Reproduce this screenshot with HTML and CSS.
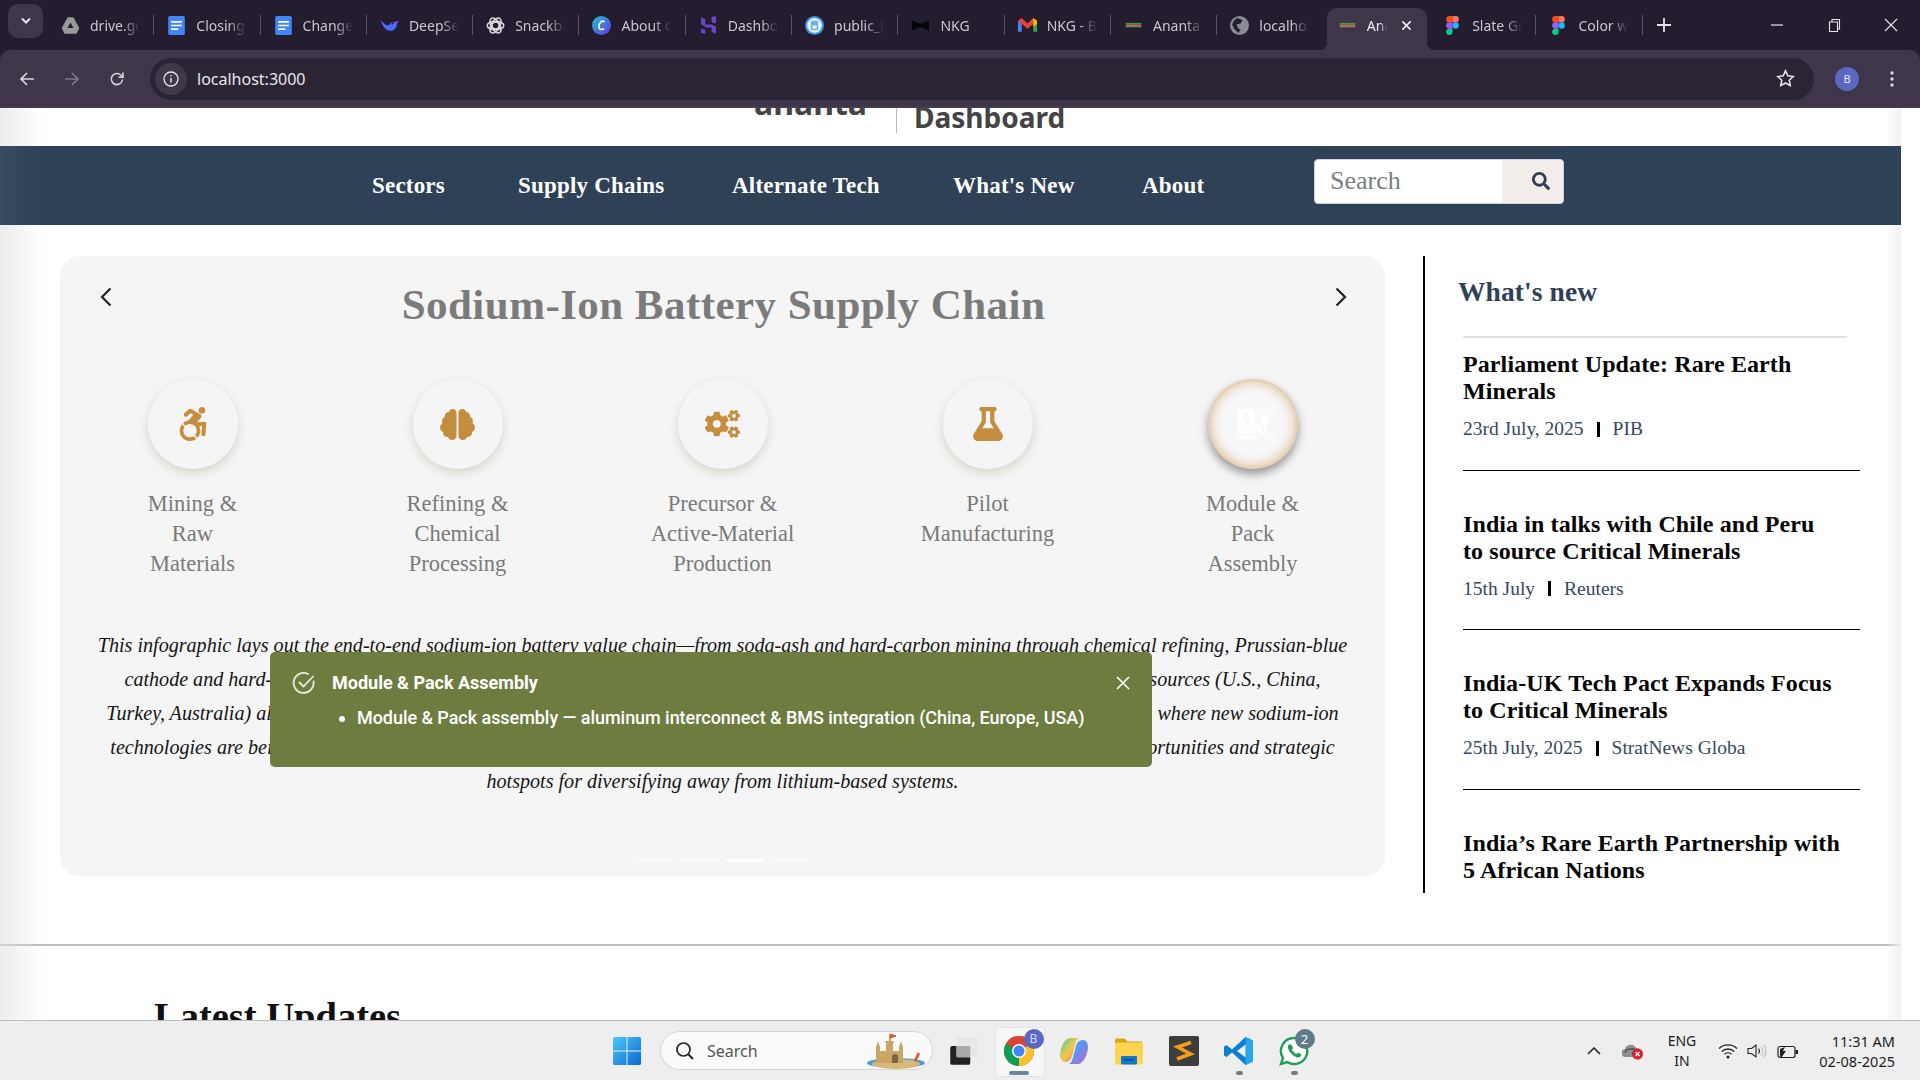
FILE: index.html
```html
<!DOCTYPE html>
<html lang="en">
<head>
<meta charset="utf-8">
<title>Ananta Dashboard</title>
<link rel="stylesheet" href="styles.css">
</head>
<body>
<div class="browser">
  <div class="tabstrip">
    <div class="tabmenu"><svg width="12" height="8" viewBox="0 0 12 8"><path d="M2 1.5 6 5.5 10 1.5" fill="none" stroke="#e6e4e8" stroke-width="2"/></svg></div>
    <div class="tab"><svg class="fav" viewBox="0 0 16 16"><path d="M5.6 1h4.8l5 9-2.4 5H3l-2.4-5z" fill="#9a9a98"/><path d="M8 5.5 10.6 10H5.4z" fill="#241e30"/></svg><span class="tabtitle">drive.google</span></div>
    <div class="tab"><svg class="fav" viewBox="0 0 16 16"><rect x="1" width="14" height="16" rx="1.5" fill="#4285f4"/><path d="M3.500 5h9M3.500 8h9M3.500 11h6" stroke="#fff" stroke-width="1.400"/></svg><span class="tabtitle">Closing</span></div>
    <div class="tab"><svg class="fav" viewBox="0 0 16 16"><rect x="1" width="14" height="16" rx="1.5" fill="#4285f4"/><path d="M3.500 5h9M3.500 8h9M3.500 11h6" stroke="#fff" stroke-width="1.400"/></svg><span class="tabtitle">Changes to</span></div>
    <div class="tab"><svg class="fav" viewBox="0 0 18 16"><path d="M1 3c1 5 4 10 9 10 4 0 6-4 6-7l2-2c-2 0-3 0-4 1-2-1-4 0-5 2-2 2-5 0-8-4z" fill="#4d6bfe"/><circle cx="12" cy="6" r="1" fill="#241e30"/></svg><span class="tabtitle">DeepSeek</span></div>
    <div class="tab"><svg class="fav" viewBox="0 0 16 16"><g fill="none" stroke="#d9d7dc" stroke-width="1.300"><circle cx="8" cy="8" r="3"/><ellipse cx="8" cy="8" rx="7" ry="3.600"/><ellipse cx="8" cy="8" rx="7" ry="3.600" transform="rotate(60 8 8)"/><ellipse cx="8" cy="8" rx="7" ry="3.600" transform="rotate(120 8 8)"/></g></svg><span class="tabtitle">Snackbar</span></div>
    <div class="tab"><svg class="fav" viewBox="0 0 18 18"><defs><linearGradient id="cv" x1="0" y1="0" x2="1" y2="1"><stop offset="0" stop-color="#19c8d2"/><stop offset="1" stop-color="#6a2fe0"/></linearGradient></defs><circle cx="9" cy="9" r="9" fill="url(#cv)"/><path d="M12 5.500C9 3.500 6.500 7 6.500 10c0 3 3 3.500 5 2" fill="none" stroke="#fff" stroke-width="1.500"/></svg><span class="tabtitle">About Canva</span></div>
    <div class="tab"><svg class="fav" viewBox="0 0 16 18"><path d="M1 1l4 2v5h6l4 2v7l-4-2v-4H5v-1l-4-2zM11 1l4-1v7l-4-1zM1 12l4 1v4l-4-1z" fill="#6747c7"/></svg><span class="tabtitle">Dashboard</span></div>
    <div class="tab"><svg class="fav" viewBox="0 0 18 18"><circle cx="9" cy="9" r="9" fill="#3b93e6"/><circle cx="9" cy="9" r="7" fill="#e8f3fc"/><rect x="5.500" y="4.500" width="7" height="9" rx="1" fill="#6bb2ee"/><rect x="7" y="9" width="4" height="3" fill="#e8f3fc"/></svg><span class="tabtitle">public_html</span></div>
    <div class="tab"><svg class="fav" viewBox="0 0 18 12"><path d="M1 1l6 3h4l6-3v10l-6-3H7l-6 3z" fill="#050505"/></svg><span class="tabtitle">NKG</span></div>
    <div class="tab"><svg class="fav" viewBox="0 0 18 14"><path d="M0 2.500V13h3.500V5z" fill="#4285f4"/><path d="M18 2.500V13h-3.500V5z" fill="#34a853"/><path d="M0 2.500 3.500 0 9 5 14.500 0 18 2.500 9 10z" fill="#ea4335"/><path d="M14.500 0 18 2.500v3l-3.500 2.500z" fill="#fbbc04"/></svg><span class="tabtitle">NKG - Boards</span></div>
    <div class="tab"><svg class="fav" viewBox="0 0 22 8"><rect x="2" y="1" width="18" height="2" fill="#2e9e58"/><rect x="2" y="3" width="18" height="2" fill="#d2622c"/><rect x="2" y="5" width="18" height="1" fill="#999"/></svg><span class="tabtitle">Ananta</span></div>
    <div class="tab tab-plain"><svg class="fav" viewBox="0 0 18 18"><circle cx="9" cy="9" r="9" fill="#8d8a92"/><path d="M7 2 12 4 10 7 6 8 8 12 10 13 8 16 4 12 2 8 4 4z" fill="#241e30"/></svg><span class="tabtitle">localhost</span></div>
    <div class="tab tab-active"><svg class="fav" viewBox="0 0 22 8"><rect x="2" y="1" width="18" height="2" fill="#2e9e58"/><rect x="2" y="3" width="18" height="2" fill="#d2622c"/><rect x="2" y="5" width="18" height="1" fill="#999"/></svg><span class="tabtitle tabtitle-short">Ananta</span><svg class="tabclose" viewBox="0 0 12 12"><path d="M1.500 1.500 10.500 10.500M10.500 1.500 1.500 10.500" stroke="#f0eef2" stroke-width="1.700"/></svg></div>
    <div class="tab"><svg class="fav" viewBox="0 0 12 18"><path d="M3 0h3v6H3a3 3 0 0 1 0-6z" fill="#f24e1e"/><path d="M6 0h3a3 3 0 0 1 0 6H6z" fill="#ff7262"/><path d="M3 6h3v6H3a3 3 0 0 1 0-6z" fill="#a259ff"/><circle cx="9" cy="9" r="3" fill="#1abcfe"/><path d="M3 12h3v3a3 3 0 1 1-3-3z" fill="#0acf83"/></svg><span class="tabtitle">Slate Grey</span></div>
    <div class="tab"><svg class="fav" viewBox="0 0 12 18"><path d="M3 0h3v6H3a3 3 0 0 1 0-6z" fill="#f24e1e"/><path d="M6 0h3a3 3 0 0 1 0 6H6z" fill="#ff7262"/><path d="M3 6h3v6H3a3 3 0 0 1 0-6z" fill="#a259ff"/><circle cx="9" cy="9" r="3" fill="#1abcfe"/><path d="M3 12h3v3a3 3 0 1 1-3-3z" fill="#0acf83"/></svg><span class="tabtitle">Color wheel</span></div>
    <svg class="newtab" viewBox="0 0 14 14"><path d="M7 0v14M0 7h14" stroke="#e6e4e8" stroke-width="1.800"/></svg>
    <div class="winctl">
      <svg viewBox="0 0 14 14" width="14" height="14"><path d="M1 7h12" stroke="#e8e6ea" stroke-width="1.200"/></svg>
      <svg viewBox="0 0 14 14" width="14" height="14"><path d="M2.500 4h8v9.500h-8zM5 4V1.500h7.500V11h-2" fill="none" stroke="#e8e6ea" stroke-width="1.100"/></svg>
      <svg viewBox="0 0 14 14" width="14" height="14"><path d="M1 1l12 12M13 1 1 13" stroke="#e8e6ea" stroke-width="1.100"/></svg>
    </div>
  </div>
  <div class="toolbar">
    <svg class="tool tool-back" viewBox="0 0 16 16"><path d="M15 8H2M8 2 2 8l6 6" fill="none" stroke="#d8d5dc" stroke-width="1.700"/></svg>
    <svg class="tool tool-fwd" viewBox="0 0 16 16"><path d="M1 8h13M8 2l6 6-6 6" fill="none" stroke="#7d7885" stroke-width="1.700"/></svg>
    <svg class="tool tool-reload" viewBox="0 0 16 16"><path d="M13.500 8.500A5.600 5.600 0 1 1 11.800 4L14 6.200M14 1.500v4.700H9.500" fill="none" stroke="#d8d5dc" stroke-width="1.600"/></svg>
    <div class="omnibox">
      <span class="siteinfo"><svg viewBox="0 0 16 16" width="16" height="16"><circle cx="8" cy="8" r="7" fill="none" stroke="#e6e4e8" stroke-width="1.300"/><path d="M8 7v4.500M8 4.200v1.400" stroke="#e6e4e8" stroke-width="1.500"/></svg></span>
      <span class="url">localhost:3000</span>
      <svg class="star" viewBox="0 0 18 18"><path d="M9 1.800l2.200 4.700 5.100.6-3.800 3.500 1 5.100L9 13.200l-4.500 2.500 1-5.100L1.700 7.100l5.100-.6z" fill="none" stroke="#e6e4e8" stroke-width="1.500"/></svg>
    </div>
    <span class="avatar">B</span>
    <svg class="kebab" viewBox="0 0 4 18"><circle cx="2" cy="3" r="1.700" fill="#d8d5dc"/><circle cx="2" cy="9" r="1.700" fill="#d8d5dc"/><circle cx="2" cy="15" r="1.700" fill="#d8d5dc"/></svg>
  </div>
</div>

<div class="viewport">
  <div class="page">
    <header class="sitehead">
      <div class="logo">ananta</div>
      <div class="brandline">Dashboard</div>
    </header>
    <nav class="mainnav">
      <div class="navlinks">
        <a class="navlink">Sectors</a>
        <a class="navlink">Supply Chains</a>
        <a class="navlink">Alternate Tech</a>
        <a class="navlink">What's New</a>
        <a class="navlink">About</a>
      </div>
      <div class="searchbox">
        <span class="searchinput">Search</span>
        <span class="searchbtn"><svg viewBox="0 0 512 512" width="18" height="18"><path fill="#2f4156" d="M505 442.700 405.300 343c-4.500-4.500-10.600-7-17-7H372c27.600-35.300 44-79.700 44-128C416 93.100 322.900 0 208 0S0 93.100 0 208s93.100 208 208 208c48.300 0 92.700-16.400 128-44v16.300c0 6.400 2.500 12.500 7 17l99.700 99.700c9.400 9.400 24.600 9.400 33.900 0l28.300-28.300c9.400-9.400 9.400-24.600.1-34zM208 336c-70.700 0-128-57.200-128-128 0-70.700 57.200-128 128-128 70.700 0 128 57.200 128 128 0 70.700-57.200 128-128 128z"/></svg></span>
      </div>
    </nav>

    <section class="mainrow">
      <div class="card">
        <div class="cardhead">
          <svg class="arrow" viewBox="0 0 12 20"><path d="M10.500 1.500 2 10l8.500 8.500" fill="none" stroke="#222" stroke-width="2.200"/></svg>
          <h1 class="cardtitle">Sodium-Ion Battery Supply Chain</h1>
          <svg class="arrow" viewBox="0 0 12 20"><path d="M1.500 1.500 10 10l-8.500 8.500" fill="none" stroke="#222" stroke-width="2.200"/></svg>
        </div>
        <div class="steps">
          <div class="step">
            <div class="stepcircle"><svg class="ic ic-chair" viewBox="0 0 448 512"><path d="M423.900 255.800 411 413.100c-3.300 40.700-63.900 35.100-60.600-4.900l10-122.500-41.100 2.300c10.100 20.700 15.800 43.900 15.800 68.500 0 41.200-16.100 78.700-42.300 106.500l-39.300-39.300c57.900-63.700 13.100-167.200-74-167.200-25.900 0-49.500 9.900-67.200 26L73 243.200c22-20.700 50.100-35.100 81.400-40.200l75.300-85.700-42.600-24.800-51.600 46c-30 26.800-70.600-18.500-40.500-45.400l68-60.700c9.800-8.800 24.100-10.200 35.500-3.600 0 0 139.300 80.900 139.500 81.100 16.200 10.100 20.700 36 6.100 52.600L285.700 229l106.100-5.900c18.500-1.100 33.600 14.400 32.100 32.700zm-64.900-154c28.100 0 50.900-22.800 50.900-50.900C409.900 22.800 387.100 0 359 0c-28.100 0-50.900 22.800-50.900 50.900 0 28.100 22.800 50.900 50.900 50.900zM179.600 456.500c-80.600 0-127.400-90.600-82.700-156.100l-39.700-39.700C36.400 287 24 320.300 24 356.400c0 130.700 150.700 201.400 251.400 122.500l-39.700-39.700c-16 10.900-35.300 17.300-56.100 17.300z"/></svg></div>
            <div class="steplabel">Mining &amp;<br>Raw<br>Materials</div>
          </div>
          <div class="step">
            <div class="stepcircle"><svg class="ic ic-brain" viewBox="0 0 576 512"><path d="M208 0c-29.900 0-54.700 20.500-61.800 48.200-.8 0-1.400-.2-2.200-.2-35.300 0-64 28.700-64 64 0 4.800.6 9.500 1.700 14C52.500 138 32 166.600 32 200c0 12.600 3.200 24.300 8.300 34.900C16.300 248.700 0 274.300 0 304c0 33.300 20.400 61.900 49.400 73.900-.9 4.600-1.400 9.300-1.400 14.100 0 39.800 32.200 72 72 72 4.100 0 8.100-.5 12-1.200 9.600 28.500 36.200 49.200 68 49.200 39.800 0 72-32.200 72-72V64c0-35.300-28.700-64-64-64zm368 304c0-29.700-16.300-55.300-40.300-69.100 5.200-10.600 8.300-22.300 8.300-34.900 0-33.400-20.500-62-49.700-74 1-4.500 1.700-9.200 1.700-14 0-35.300-28.700-64-64-64-.8 0-1.500.2-2.200.2C422.700 20.500 397.900 0 368 0c-35.300 0-64 28.600-64 64v376c0 39.800 32.200 72 72 72 31.800 0 58.400-20.700 68-49.200 3.900.7 7.900 1.200 12 1.200 39.800 0 72-32.200 72-72 0-4.800-.5-9.500-1.400-14.100 29-12 49.400-40.600 49.400-73.900z"/></svg></div>
            <div class="steplabel">Refining &amp;<br>Chemical<br>Processing</div>
          </div>
          <div class="step">
            <div class="stepcircle"><svg class="ic ic-cogs" viewBox="0 0 640 512"><path d="M512.100 191l-8.200 14.300c-3 5.300-9.400 7.500-15.100 5.400-11.800-4.400-22.600-10.700-32.100-18.600-4.600-3.800-5.800-10.500-2.800-15.700l8.200-14.300c-6.900-8-12.300-17.300-15.900-27.400h-16.500c-6 0-11.200-4.300-12.200-10.300-2-12-2.100-24.600 0-37.100 1-6 6.200-10.400 12.200-10.400h16.500c3.600-10.100 9-19.400 15.900-27.400l-8.200-14.300c-3-5.200-1.900-11.900 2.800-15.700 9.500-7.900 20.400-14.200 32.100-18.600 5.700-2.100 12.100.1 15.100 5.400l8.200 14.300c10.500-1.900 21.200-1.900 31.700 0L552 6.300c3-5.300 9.400-7.500 15.100-5.400 11.800 4.400 22.600 10.700 32.100 18.600 4.600 3.800 5.800 10.500 2.800 15.700l-8.200 14.300c6.900 8 12.300 17.300 15.900 27.400h16.500c6 0 11.200 4.300 12.200 10.300 2 12 2.100 24.600 0 37.100-1 6-6.200 10.400-12.200 10.400h-16.500c-3.600 10.100-9 19.400-15.900 27.400l8.200 14.300c3 5.200 1.900 11.900-2.800 15.700-9.500 7.900-20.400 14.200-32.100 18.600-5.700 2.100-12.100-.1-15.100-5.400l-8.200-14.300c-10.400 1.900-21.200 1.900-31.700 0zm-10.500-58.800c38.500 29.600 82.400-14.300 52.800-52.800-38.500-29.700-82.400 14.300-52.800 52.800zM386.300 286.100l33.700 16.800c10.100 5.800 14.500 18.100 10.500 29.100-8.900 24.200-26.400 46.400-42.600 65.800-7.400 8.900-20.200 11.100-30.300 5.300l-29.100-16.800c-16 13.700-34.600 24.600-54.900 31.700v33.600c0 11.600-8.300 21.600-19.700 23.600-24.600 4.200-50.400 4.400-75.900 0-11.500-2-20-11.900-20-23.600V418c-20.300-7.200-38.900-18-54.900-31.700L74 403c-10 5.800-22.900 3.600-30.300-5.300-16.200-19.400-33.300-41.600-42.200-65.700-4-10.900.4-23.200 10.500-29.100l33.300-16.800c-3.900-20.900-3.900-42.400 0-63.400L12 205.800c-10.100-5.800-14.600-18.100-10.500-29 8.900-24.200 26-46.400 42.200-65.800 7.400-8.900 20.200-11.100 30.300-5.300l29.100 16.800c16-13.700 34.600-24.600 54.900-31.700V57.100c0-11.500 8.200-21.500 19.600-23.500 24.600-4.200 50.500-4.400 76-.1 11.500 2 20 11.900 20 23.600v33.600c20.300 7.200 38.900 18 54.900 31.700l29.100-16.800c10-5.800 22.900-3.600 30.300 5.300 16.200 19.400 33.200 41.600 42.100 65.800 4 10.900.1 23.200-10 29.100l-33.700 16.800c3.900 21 3.900 42.500 0 63.500zm-117.600 21.100c59.200-77-28.700-164.900-105.700-105.700-59.200 77 28.700 164.900 105.700 105.700zm243.400 182.700l-8.200 14.300c-3 5.300-9.400 7.500-15.100 5.400-11.800-4.400-22.600-10.700-32.100-18.600-4.600-3.800-5.800-10.500-2.800-15.700l8.200-14.300c-6.900-8-12.300-17.300-15.900-27.400h-16.500c-6 0-11.200-4.300-12.200-10.300-2-12-2.100-24.600 0-37.100 1-6 6.200-10.400 12.200-10.400h16.500c3.600-10.100 9-19.400 15.900-27.400l-8.200-14.300c-3-5.200-1.900-11.900 2.800-15.700 9.500-7.900 20.400-14.200 32.100-18.600 5.700-2.100 12.100.1 15.100 5.400l8.200 14.300c10.500-1.900 21.200-1.900 31.700 0l8.200-14.300c3-5.300 9.400-7.500 15.100-5.400 11.800 4.400 22.600 10.700 32.100 18.600 4.600 3.800 5.800 10.500 2.800 15.700l-8.200 14.300c6.900 8 12.300 17.300 15.900 27.400h16.500c6 0 11.200 4.300 12.200 10.300 2 12 2.100 24.600 0 37.100-1 6-6.200 10.400-12.200 10.400h-16.500c-3.600 10.100-9 19.400-15.900 27.400l8.200 14.300c3 5.200 1.900 11.900-2.800 15.700-9.500 7.900-20.400 14.200-32.100 18.600-5.700 2.100-12.100-.1-15.100-5.400l-8.200-14.300c-10.400 1.900-21.200 1.900-31.700 0zM501.600 431c38.500 29.600 82.400-14.300 52.800-52.800-38.500-29.600-82.400 14.300-52.800 52.800z"/></svg></div>
            <div class="steplabel">Precursor &amp;<br>Active-Material<br>Production</div>
          </div>
          <div class="step">
            <div class="stepcircle"><svg class="ic ic-flask" viewBox="0 0 448 512"><path d="M437.200 403.500 320 215V64h8c13.300 0 24-10.700 24-24V24c0-13.300-10.700-24-24-24H120c-13.300 0-24 10.700-24 24v16c0 13.300 10.700 24 24 24h8v151L10.800 403.500C-18.500 450.600 15.300 512 70.900 512h306.200c55.700 0 89.400-61.500 60.100-108.500zM137.900 320l48.200-77.600c3.700-5.200 5.800-11.600 5.800-18.400V64h64v160c0 6.900 2.200 13.200 5.800 18.400l48.200 77.600h-172z"/></svg></div>
            <div class="steplabel">Pilot<br>Manufacturing</div>
          </div>
          <div class="step">
            <div class="stepcircle stepcircle-active"><svg class="ic ic-charge" viewBox="0 0 576 512"><path d="M336 448H16c-8.800 0-16 7.200-16 16v32c0 8.800 7.200 16 16 16h320c8.800 0 16-7.200 16-16v-32c0-8.800-7.200-16-16-16zm208-320V80c0-8.800-7.200-16-16-16s-16 7.200-16 16v48h-32V80c0-8.800-7.200-16-16-16s-16 7.200-16 16v48h-16c-8.800 0-16 7.200-16 16v32c0 35.800 23.500 66.100 56 76.300V376c0 13.200-10.800 24-24 24s-24-10.800-24-24v-32c0-48.500-39.500-88-88-88h-8V64c0-35.300-28.700-64-64-64H96C60.700 0 32 28.700 32 64v352h288V304h8c22.100 0 40 17.900 40 40v27.800c0 37.700 27 72 64.500 75.900 43 4.300 79.500-29.500 79.500-71.700V252.300c32.500-10.200 56-40.500 56-76.300v-32c0-8.800-7.200-16-16-16zM260 175.100l-88 112c-3.100 3.900-7.700 5.900-12.400 5.900-3.200 0-6.500-1-9.300-3.100-6-4.400-8.100-12.400-5.200-19.100L177.300 192H104c-6.100 0-11.600-3.400-14.300-8.900-2.700-5.400-2.100-11.900 1.600-16.700l88-112c4.400-5.700 12.300-7.700 18.900-4.800 6.600 2.900 10.400 9.900 9.100 17L175 144h73c6.100 0 11.600 3.400 14.300 8.900 2.700 5.400 2.100 11.900-2.300 22.200z"/></svg></div>
            <div class="steplabel">Module &amp;<br>Pack<br>Assembly</div>
          </div>
        </div>
        <p class="cardtext">This infographic lays out the end-to-end sodium-ion battery value chain—from soda-ash and hard-carbon mining through chemical refining, Prussian-blue<br>
        cathode and hard-carbon anode production, pilot manufacturing and final module assembly—highlighting key critical mineral sources (U.S., China,<br>
        Turkey, Australia) alongside the leading global producers and processors at every stage of the chain, and the key regions showing where new sodium-ion<br>
        technologies are being developed and scaled up for commercial use, so that the map can now reveal supply gaps, investment opportunities and strategic<br>
        hotspots for diversifying away from lithium-based systems.</p>
        <div class="dots"><i class="dot"></i><i class="dot"></i><i class="dot dot-on"></i><i class="dot"></i></div>

        <div class="toast">
          <svg class="toastcheck" viewBox="0 0 24 24"><path d="M21.500 10.500A10 10 0 1 1 16 3" fill="none" stroke="#e9ebe0" stroke-width="1.800" stroke-linecap="round"/><path d="M7.500 11.500 11.500 15.500 21 5.500" fill="none" stroke="#e9ebe0" stroke-width="1.800" stroke-linecap="round"/></svg>
          <div class="toastbody">
            <div class="toasttitle">Module &amp; Pack Assembly</div>
            <ul class="toastlist"><li>Module &amp; Pack assembly — aluminum interconnect &amp; BMS integration (China, Europe, USA)</li></ul>
          </div>
          <svg class="toastclose" viewBox="0 0 14 14"><path d="M1 1l12 12M13 1 1 13" stroke="#fff" stroke-width="1.700"/></svg>
        </div>
      </div>

      <aside class="sidebar">
        <h2 class="sidetitle">What's new</h2>
        <div class="sidefirst">
          <article class="news">
            <h3 class="newstitle">Parliament Update: Rare Earth<br>Minerals</h3>
            <div class="newsmeta"><span>23rd July, 2025</span><i class="metabar"></i><span>PIB</span></div>
          </article>
          <article class="news">
            <h3 class="newstitle">India in talks with Chile and Peru<br>to source Critical Minerals</h3>
            <div class="newsmeta"><span>15th July</span><i class="metabar"></i><span>Reuters</span></div>
          </article>
          <article class="news">
            <h3 class="newstitle">India-UK Tech Pact Expands Focus<br>to Critical Minerals</h3>
            <div class="newsmeta"><span>25th July, 2025</span><i class="metabar"></i><span>StratNews Globa</span></div>
          </article>
          <article class="news">
            <h3 class="newstitle">India’s Rare Earth Partnership with<br>5 African Nations</h3>
          </article>
        </div>
      </aside>
    </section>

    <hr class="pagerule">
    <h2 class="latest">Latest Updates</h2>
  </div>
  <div class="fade fade-left"></div>
  <div class="fade fade-right"></div>
</div>

<footer class="taskbar">
  <svg class="winlogo" viewBox="0 0 28 28"><defs><linearGradient id="wl" x1="0" y1="0" x2="1" y2="1"><stop offset="0" stop-color="#4fc8fb"/><stop offset="1" stop-color="#0669cf"/></linearGradient></defs><path fill="url(#wl)" d="M0 1.500A1.500 1.500 0 0 1 1.500 0H13.500V13.500H0zM14.500 0H26.500A1.500 1.500 0 0 1 28 1.500V13.500H14.500zM0 14.500H13.500V28H1.500A1.500 1.500 0 0 1 0 26.500zM14.500 14.500H28V26.500A1.500 1.500 0 0 1 26.500 28H14.500z"/></svg>
  <div class="tbsearch">
    <svg class="tbsearchicon" viewBox="0 0 20 20"><circle cx="8.500" cy="8.500" r="6.500" fill="none" stroke="#222" stroke-width="1.700"/><path d="M13.500 13.500 18 18" stroke="#222" stroke-width="1.900"/></svg>
    <span class="tbsearchtext">Search</span>
    <svg class="castle" viewBox="0 0 60 36"><ellipse cx="30" cy="30" rx="29" ry="5" fill="#4b9bd6"/><ellipse cx="30" cy="31" rx="24" ry="5" fill="#d9b877"/><path d="M10 30V14l2-6 2 6v4h6V11l-1-3h4v-4l2 1v3h3l-1 3v7h6v-4l2-6 2 6v16z" fill="#c9a566"/><path d="M24 1v5M24 1l6 2-6 2" fill="#e2512d" stroke="#e2512d"/><path d="M26 30v-6a3 3 0 0 1 6 0v6z" fill="#7d6540"/><path d="M48 27l4-8 2 2-4 8z" fill="#e2512d"/></svg>
  </div>
  <div class="tbapp tbapp-task"><svg class="tbicon" viewBox="0 0 24 24"><rect x="1" y="8" width="16" height="15" rx="1.500" fill="#222"/><rect x="6" y="1" width="17" height="16" rx="1.500" fill="#e6e6e6" opacity=".9"/><rect x="6" y="8" width="11" height="9" fill="#a9a9a9"/></svg></div>
  <div class="tbapp tbapp-on">
    <svg class="tbicon tbicon-large" viewBox="0 0 32 32"><circle cx="16" cy="16" r="15" fill="#db4437"/><path d="M16 16 29 8.500A15 15 0 0 1 16 31z" fill="#fbc02d"/><path d="M16 16 16 31A15 15 0 0 1 3 8.500z" fill="#0f9d58"/><path d="M3 8.500A15 15 0 0 1 29 8.500H16z" fill="#db4437"/><circle cx="16" cy="16" r="7" fill="#fff"/><circle cx="16" cy="16" r="5.500" fill="#4285f4"/></svg>
    <span class="tbbadge tbbadge-b">B</span><i class="tbline tbline-long"></i>
  </div>
  <div class="tbapp"><svg class="tbicon" viewBox="0 0 30 30"><defs><linearGradient id="cp1" x1="0" y1="0" x2="1" y2="1"><stop offset="0" stop-color="#2fb5e8"/><stop offset=".55" stop-color="#6b8cf0"/><stop offset="1" stop-color="#d65db1"/></linearGradient><linearGradient id="cp2" x1="0" y1="0" x2="1" y2="1"><stop offset="0" stop-color="#3fc7a0"/><stop offset=".5" stop-color="#f2c94c"/><stop offset="1" stop-color="#f0655a"/></linearGradient></defs><path d="M11 2h9c-2 1-3 3-4 7l-3 11c-1 4-4 6-7 6-3 0-5-3-5-7 0-5 3-13 6-15 1-1 2-2 4-2z" fill="url(#cp2)"/><path d="M19 28h-9c2-1 3-3 4-7l3-11c1-4 4-6 7-6 3 0 5 3 5 7 0 5-3 13-6 15-1 1-2 2-4 2z" fill="url(#cp1)"/></svg></div>
  <div class="tbapp"><svg class="tbicon" viewBox="0 0 30 30"><path d="M1 4a1.500 1.500 0 0 1 1.500-1.500h8l3 3H28v5H1z" fill="#dca411"/><rect x="1" y="6.500" width="28" height="22" rx="1.500" fill="#fbd452"/><rect x="7" y="20" width="16" height="8.500" rx="1" fill="#1577c7"/><rect x="10" y="23" width="10" height="1.500" fill="#0c4f88"/></svg></div>
  <div class="tbapp"><svg class="tbicon" viewBox="0 0 30 30"><rect width="30" height="30" rx="2" fill="#3d3d3d"/><path d="M22 6.500 8.500 11 21.500 18 8 23" fill="none" stroke="#f59e16" stroke-width="3.600"/></svg></div>
  <div class="tbapp"><svg class="tbicon" viewBox="0 0 30 30"><path d="M21.500 1 29 4.500v21L21.500 29 8 16.500 2.500 21 0 19.500V10.500L2.500 9 8 13.500z" fill="#0e7fd0"/><path d="M21.500 1 29 4.500v21L21.500 29z" fill="#26a6ee"/><path d="M21.500 8.500v13L13 15z" fill="#eeeeee"/></svg><i class="tbline"></i></div>
  <div class="tbapp">
    <svg class="tbicon" viewBox="0 0 30 30"><path d="M15 2a13 13 0 0 0-11 20L2 28l6.300-2A13 13 0 1 0 15 2z" fill="#fff" stroke="#1f9e57" stroke-width="2.400"/><path d="M10 8.500c-1.500 1.500-1.500 4 1 7.500s6 5.500 8 5.500 3.500-1.500 3.500-3l-3.500-2-1.500 1.500c-2-.7-4-2.800-4.700-4.500l1.400-1.500-2-3.500z" fill="#1f9e57"/></svg>
    <span class="tbbadge tbbadge-n">2</span><i class="tbline"></i>
  </div>
  <div class="tray">
    <span class="traycell tray-chevron"><svg viewBox="0 0 14 8" width="14" height="8"><path d="M1 7l6-6 6 6" fill="none" stroke="#222" stroke-width="1.500"/></svg></span>
    <span class="traycell tray-cloud"><svg viewBox="0 0 22 18" width="22" height="18"><path d="M4 15a4 4 0 0 1-1-8 6 6 0 0 1 11-1 4 4 0 0 1 3 7v2z" fill="#8f8f8f"/><path d="M3 11a4 4 0 0 1 4-4h6" fill="none" stroke="#333" stroke-width="1"/><circle cx="15.500" cy="12" r="5.500" fill="#d3202f"/><path d="M13.500 10l4 4M17.500 10l-4 4" stroke="#fff" stroke-width="1.300"/></svg></span>
    <span class="traycell tray-lang">ENG<br>IN</span>
    <span class="traycell tray-wifi"><svg viewBox="0 0 20 16" width="20" height="16"><path d="M1 5.500a13 13 0 0 1 18 0M3.800 8.500a9 9 0 0 1 12.400 0M6.500 11.300a5 5 0 0 1 7 0" fill="none" stroke="#222" stroke-width="1.300"/><circle cx="10" cy="14" r="1.500" fill="#222"/></svg></span>
    <span class="traycell tray-vol"><svg viewBox="0 0 20 16" width="20" height="16"><path d="M1 5.500h3.500L9 2v12l-4.500-3.500H1z" fill="none" stroke="#222" stroke-width="1.100"/><path d="M11.500 5.500a4 4 0 0 1 0 5" fill="none" stroke="#222" stroke-width="1.100"/><path d="M14 3.500a7 7 0 0 1 0 9M16.500 1.500a10 10 0 0 1 0 13" fill="none" stroke="#bbb" stroke-width="1.100"/></svg></span>
    <span class="traycell tray-batt"><svg viewBox="0 0 22 16" width="22" height="16"><rect x="1" y="3.500" width="17" height="11" rx="2" fill="none" stroke="#222" stroke-width="1.200"/><rect x="18.500" y="7" width="2.500" height="4" fill="#222"/><path d="M3 14V6l5-2-2 4h3L4 15z" fill="#222"/></svg></span>
    <span class="clock">11:31 AM<br>02-08-2025</span>
  </div>
</footer>
</body>
</html>
```
FILE: styles.css
```css
* { box-sizing: border-box; }
html, body { margin: 0; height: 100%; }
body {
  width: 1920px;
  height: 1080px;
  overflow: hidden;
  display: flex;
  flex-direction: column;
  background: #fff;
  font-family: "Liberation Serif", serif;
}
h1, h2, h3, p, ul { margin: 0; padding: 0; }

/* browser chrome */
.browser { flex: none; height: 108px; background: #231d2f; }
.tabstrip { height: 50px; display: flex; align-items: center; padding-left: 8px; position: relative; }
.tabmenu { width: 35px; height: 34px; margin: -8px 5px 0 0; background: #3f3749; border-radius: 10px; display: flex; align-items: center; justify-content: center; }
.tab {
  width: 106.3px;
  height: 42px;
  margin-top: 8px;
  padding: 0 0 8px 13px;
  display: flex;
  align-items: center;
  gap: 10px;
  position: relative;
  flex: none;
}
.tab::after { content: ""; position: absolute; right: 0; top: 7px; height: 20px; width: 1px; background: #5a5463; }
.tab-plain::after, .tab-active::after { display: none; }
.tab-active { background: #3f3749; border-radius: 10px 10px 0 0; width: 100px; margin: 8px 3.300px 0; padding-left: 11px; }
.tab-active::before { content: ""; position: absolute; left: -8px; bottom: 0; width: 8px; height: 8px; background: radial-gradient(circle at 0 0, transparent 8px, #3f3749 8.500px); }
.tab-active::after { display: block; left: auto; right: -8px; top: auto; bottom: 0; width: 8px; height: 8px; background: radial-gradient(circle at 100% 0, transparent 8px, #3f3749 8.500px); }
.fav { width: 19px; height: 19px; flex: none; }
.tabtitle {
  font: 14px "Noto Sans", sans-serif;
  color: #c9c6cd;
  width: 50px;
  overflow: hidden;
  white-space: nowrap;
  -webkit-mask-image: linear-gradient(90deg, #000 65%, transparent);
  mask-image: linear-gradient(90deg, #000 65%, transparent);
}
.tabtitle-short { width: 20px; color: #ece9ef; }
.tabclose { width: 11px; height: 11px; flex: none; margin-left: 4px; }
.newtab { width: 14px; height: 14px; margin: 0 0 0 14px; flex: none; }
.winctl { margin-left: auto; width: 128px; margin-right: 22px; display: flex; justify-content: space-between; }

.toolbar { height: 58px; background: #3f3749; border-radius: 10px 10px 0 0; display: flex; align-items: center; position: relative; border-bottom: 1px solid #4a4253; }
.tool { width: 16px; height: 16px; flex: none; }
.tool-back { margin-left: 19px; }
.tool-fwd { margin-left: 29px; }
.tool-reload { margin-left: 29px; }
.omnibox { margin-left: 25px; width: 1664px; height: 42px; background: #2b2435; border-radius: 21px; display: flex; align-items: center; padding-left: 5px; }
.siteinfo { width: 32px; height: 32px; border-radius: 50%; background: #40384a; display: flex; align-items: center; justify-content: center; }
.url { margin-left: 10px; font: 16px "Noto Sans", sans-serif; color: #e8e6ea; }
.star { width: 19px; height: 19px; margin-left: auto; margin-right: 19px; }
.avatar { margin-left: 21px; width: 24px; height: 24px; border-radius: 50%; background: #5b68c0; color: #e8e9f6; font: 11px/24px "Noto Sans", sans-serif; text-align: center; flex: none; }
.kebab { margin-left: 31px; width: 4px; height: 18px; flex: none; }

/* page viewport */
.viewport { flex: 1; min-height: 0; position: relative; overflow: hidden; background: #fff; }
.page { width: 1901px; }
.fade { position: absolute; top: 0; bottom: 0; pointer-events: none; }
.fade-left { left: 0; width: 45px; background: linear-gradient(90deg, rgba(225,225,225,.6), rgba(255,255,255,0)); }
.fade-right { left: 1885px; width: 16px; background: linear-gradient(90deg, rgba(240,240,240,0), rgba(240,240,240,.9)); }

.sitehead { height: 38px; padding-left: 754px; display: flex; overflow: hidden; }
.logo { margin-top: -25px; height: 40px; width: 142px; font: 700 32px/40px "Noto Sans", sans-serif; color: #444; }
.brandline { height: 25px; border-left: 1px solid #bbb; padding-left: 17px; font: 700 28px/18px "Noto Sans", sans-serif; color: #444; }

.mainnav { height: 79px; background: linear-gradient(90deg, #384b5f, #2f4156 40px); display: flex; align-items: center; padding-left: 372px; position: relative; z-index: 1; }
.navlinks { display: grid; grid-template-columns: 146px 214px 221px 189px 172px; }
.navlink { font: 700 23px/30px "Liberation Serif", serif; color: #fff; letter-spacing: .2px; white-space: nowrap; }
.searchbox { width: 250px; height: 45px; margin-top: -9px; display: flex; border-radius: 4px; overflow: hidden; background: #fff; border: 1px solid #cdd3d9; }
.searchinput { flex: 1; padding-left: 15px; font: 26px/41px "Liberation Serif", serif; color: #777f86; }
.searchbtn { width: 61px; padding-left: 16px; background: #f3eee9; display: flex; align-items: center; justify-content: center; }

.mainrow { display: flex; height: 719px; padding: 31px 0 0 60px; }
.card { width: 1325px; height: 620px; flex: none; border-radius: 20px; background: #f5f5f5; padding-top: 19px; position: relative; }
.cardhead { height: 60px; display: flex; justify-content: space-between; padding: 0 38px 0 40px; }
.arrow { width: 12px; height: 20px; margin-top: 12px; flex: none; }
.cardtitle { font: 700 43px/60px "Liberation Serif", serif; color: #7b7b7b; letter-spacing: .45px; white-space: nowrap; }
.steps { display: grid; grid-template-columns: repeat(5, 265px); margin-top: 44px; height: 249px; }
.step { display: flex; flex-direction: column; align-items: center; }
.stepcircle { width: 90px; height: 90px; border-radius: 50%; background: #f5f5f5; box-shadow: 0 4px 10px rgba(170,180,150,.45); display: flex; align-items: center; justify-content: center; fill: #c48d3f; }
.stepcircle-active { box-shadow: inset 0 0 14px rgba(197,141,63,.8), 0 5px 10px rgba(0,0,0,.4); background: #f8f8f8; fill: #fff; }
.ic { display: block; }
.ic-chair { height: 34px; width: 30px; }
.ic-brain { height: 31px; width: 35px; }
.ic-cogs { height: 28px; width: 35px; }
.ic-flask { height: 34px; width: 30px; }
.ic-charge { height: 30px; width: 34px; }
.steplabel { margin-top: 20px; font: 22.500px/30px "Liberation Serif", serif; color: #7a7a7a; text-align: center; white-space: nowrap; }
.cardtext { font: italic 20.100px/34px "Liberation Serif", serif; color: #141414; text-align: center; white-space: nowrap; }
.dots { display: flex; gap: 8px; justify-content: center; margin-top: 61px; }
.dot { width: 37px; height: 3px; background: rgba(255,255,255,.5); }
.dot-on { background: #fff; }

.toast { position: absolute; left: 210px; top: 396px; width: 882px; height: 115px; background: #6f7c3f; border-radius: 5px; color: #fff; font-family: Roboto, sans-serif; display: flex; padding: 19px 0 0 22px; }
.toastcheck { width: 24px; height: 24px; flex: none; margin-right: 16px; }
.toastbody { flex: 1; }
.toasttitle { font: 700 18px/24px Roboto, sans-serif; }
.toastlist { margin-top: 11px; padding-left: 25px; font: 500 18px/24px Roboto, sans-serif; letter-spacing: -.05px; white-space: nowrap; }
.toastclose { width: 14px; height: 14px; flex: none; margin: 5px 22px 0 0; }

.sidebar { margin-left: 38px; width: 440px; height: 637px; border-left: 2px solid #000; padding-left: 33px; overflow: hidden; }
.sidetitle { font: 700 27.500px/36px "Liberation Serif", serif; color: #2f4156; margin-top: 18px; letter-spacing: .1px; }
.sidefirst { margin-top: 26px; margin-left: 5px; }
.news { width: 397px; padding: 40px 0 28.500px; border-bottom: 1px solid #000; position: relative; }
.news:first-child { padding-top: 15px; }
.news:first-child::before { content: ""; position: absolute; left: 0; top: 0; width: 384px; height: 2px; background: #e0e0e0; }
.news:last-child { border-bottom: 0; }
.newstitle { font: 700 24px/27px "Liberation Serif", serif; color: #050505; letter-spacing: .1px; white-space: nowrap; }
.newsmeta { margin-top: 12px; display: flex; align-items: center; font: 19.500px/24px "Liberation Serif", serif; color: #34495e; }
.metabar { width: 3px; height: 15px; background: #000; margin: 0 13px; }
.pagerule { margin: 0; border: 0; height: 2px; background: #bdbdbd; }
.latest { font: 700 38.500px/50px "Liberation Serif", serif; color: #111; margin: 45px 0 0 154px; }

/* taskbar */
.taskbar { flex: none; height: 60px; background: #eeeeee; border-top: 1px solid #bdbdbd; display: flex; align-items: center; padding-left: 613px; }
.winlogo { width: 28px; height: 28px; flex: none; }
.tbsearch { margin-left: 19px; width: 273px; height: 39px; border-radius: 20px; background: #fafafa; border: 1px solid #d6d6d6; display: flex; align-items: center; padding-left: 14px; flex: none; position: relative; }
.tbsearchicon { width: 20px; height: 20px; flex: none; }
.tbsearchtext { margin-left: 12px; font: 16px "Noto Sans", sans-serif; color: #555; }
.castle { margin-left: auto; margin-right: 6px; width: 60px; height: 36px; }
.tbapp { width: 55px; height: 48px; display: flex; align-items: center; justify-content: center; position: relative; flex: none; }
.tbapp-task { width: 58.500px; padding-left: 4px; }
.tbapp-on::before { content: ""; position: absolute; left: 3.500px; top: 0; width: 48px; height: 48px; background: #f7f7f7; border: 1px solid #e4e4e4; border-radius: 4px; }
.tbicon { width: 30px; height: 30px; position: relative; display: block; flex: none; }
.tbicon-large { width: 32px; height: 32px; }
.tbbadge { position: absolute; top: 2px; right: 8px; width: 20px; height: 20px; border-radius: 50%; color: #fff; font: 12px/20px "Noto Sans", sans-serif; text-align: center; }
.tbbadge-b { background: #5b68c0; color: #d5d8f2; right: 3px; }
.tbbadge-n { background: #5f7a8b; right: 7px; font-size: 13px; }
.tbline { position: absolute; bottom: 0; left: 50%; width: 7px; height: 4px; margin-left: -3.500px; border-radius: 2px; background: #7a7a7a; }
.tbline-long { width: 20px; margin-left: -10px; background: #6d8496; }
.tray { margin-left: auto; padding-right: 25px; display: flex; align-items: center; color: #1c1c1c; font: 14px/20px "Noto Sans", sans-serif; }
.traycell { display: flex; align-items: center; justify-content: center; }
.tray-chevron { width: 40px; }
.tray-cloud { width: 38px; }
.tray-lang { width: 60px; text-align: center; }
.tray-wifi { width: 32px; }
.tray-vol { width: 26px; }
.tray-batt { width: 36px; }
.clock { width: 89px; text-align: right; font-size: 14.500px; white-space: nowrap; }
```
